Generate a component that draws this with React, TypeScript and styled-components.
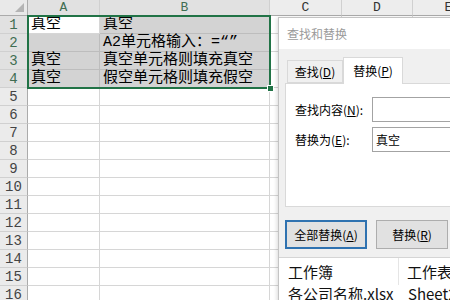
import React from 'react';
import styled, { createGlobalStyle } from 'styled-components';

const Global = createGlobalStyle`
  html, body { margin: 0; padding: 0; width: 450px; height: 300px; overflow: hidden; background: #fff; }
  #root { width: 450px; height: 300px; overflow: hidden; }
`;

const Stage = styled.div`
  position: relative;
  width: 450px;
  height: 300px;
  overflow: hidden;
  font-family: "Noto Sans CJK SC", sans-serif;
`;

const Sheet = styled.div`
  display: grid;
  grid-template-columns: 28px 72px 170px 72px 71px 72px;
  grid-template-rows: 16px repeat(16, 18px);
  font-family: "Liberation Mono", "Noto Sans CJK SC", monospace;
`;

const Corner = styled.div`
  grid-row: 1;
  grid-column: 1;
  box-sizing: border-box;
  background: #e9e9e9;
  border-right: 1px solid #ababab;
  border-bottom: 1px solid #ababab;
  display: flex;
  align-items: flex-end;
  justify-content: flex-end;
  padding: 0 3px 3px 0;
`;

const ColHead = styled.div<{ $sel?: boolean; $c: number }>`
  grid-row: 1;
  grid-column: ${p => p.$c};
  box-sizing: border-box;
  background: ${p => (p.$sel ? '#e1e1e1' : '#ededed')};
  border-right: 1px solid #d0d0d0;
  border-bottom: 1px solid ${p => (p.$sel ? '#7d9f8a' : '#ababab')};
  color: ${p => (p.$sel ? '#3f6d52' : '#333')};
  font-size: 13px;
  line-height: 15px;
  text-align: center;
`;

const RowHead = styled.div<{ $sel?: boolean; $r: number }>`
  grid-row: ${p => p.$r};
  grid-column: 1;
  box-sizing: border-box;
  background: ${p => (p.$sel ? '#e1e1e1' : '#ebebeb')};
  border-right: 1px solid ${p => (p.$sel ? '#7d9f8a' : '#ababab')};
  border-bottom: 1px solid #d0d0d0;
  color: ${p => (p.$sel ? '#3f6d52' : '#444')};
  font-size: 14px;
  line-height: 18px;
  text-align: center;
`;

const Cell = styled.div<{ $sel?: boolean; $active?: boolean; $r: number; $c: number }>`
  grid-row: ${p => p.$r};
  grid-column: ${p => p.$c};
  box-sizing: border-box;
  background: ${p => (p.$active ? '#fff' : p.$sel ? '#d3d3d3' : '#fff')};
  border-right: 1px solid ${p => (p.$sel && !p.$active ? '#bdbdbd' : '#d6d6d6')};
  border-bottom: 1px solid ${p => (p.$sel && !p.$active ? '#bdbdbd' : '#d6d6d6')};
  color: #000;
  font-size: 15px;
  line-height: 18px;
  padding-left: 3px;
  white-space: nowrap;
  overflow: visible;
  font-family: "Liberation Mono", "Noto Sans CJK SC", monospace;
`;

const SelectionFrame = styled.div`
  grid-column: 2 / 4;
  grid-row: 2 / 6;
  margin: -1px;
  border: 2px solid #217346;
  position: relative;
  pointer-events: none;
  z-index: 2;
`;

const FillHandle = styled.div`
  position: absolute;
  right: -5px;
  bottom: -5px;
  width: 5px;
  height: 5px;
  background: #217346;
  border: 1px solid #fff;
`;

const Dialog = styled.div`
  position: absolute;
  left: 278px;
  top: 17px;
  width: 190px;
  height: 300px;
  background: #f0f0f0;
  border: 1px solid #c4c4c4;
  box-shadow: -1px 1px 4px rgba(0, 0, 0, 0.15);
  display: flex;
  flex-direction: column;
  font-family: "Noto Sans CJK SC", sans-serif;
  z-index: 5;
`;

const TitleBar = styled.div`
  height: 31px;
  background: #fff;
  display: flex;
  align-items: center;
  padding-left: 8px;
  font-size: 12px;
  color: #9a9a9a;
`;

const TabStrip = styled.div`
  display: flex;
  align-items: flex-end;
  height: 26px;
  margin: 8px 0 0 8px;
  position: relative;
  z-index: 1;
`;

const Tab = styled.div<{ $active?: boolean }>`
  box-sizing: border-box;
  width: ${p => (p.$active ? '60px' : '56px')};
  height: ${p => (p.$active ? '27px' : '23px')};
  margin-bottom: ${p => (p.$active ? '-1px' : '0')};
  background: ${p => (p.$active ? '#fff' : '#f0f0f0')};
  border: 1px solid #d9d9d9;
  border-bottom: ${p => (p.$active ? 'none' : '1px solid #d9d9d9')};
  font-size: 12px;
  color: #000;
  display: flex;
  align-items: center;
  justify-content: center;
  padding-bottom: ${p => (p.$active ? '2px' : '0')};
  u { text-underline-offset: 1px; }
`;

const Panel = styled.div`
  box-sizing: border-box;
  height: 124px;
  margin-left: 6px;
  background: #fff;
  border: 1px solid #d9d9d9;
  padding: 13px 0 0 9px;
  display: grid;
  grid-template-columns: 77px 1fr;
  grid-auto-rows: 25px;
  row-gap: 5px;
  align-items: center;
  align-content: start;
`;

const Label = styled.div`
  font-size: 12px;
  color: #000;
  u { text-underline-offset: 1px; }
`;

const Field = styled.div`
  box-sizing: border-box;
  height: 25px;
  background: #fff;
  border: 1px solid #a3a3a3;
  border-right: none;
  font-size: 12px;
  line-height: 23px;
  padding-left: 3px;
  color: #000;
`;

const ButtonRow = styled.div`
  display: flex;
  gap: 9px;
  margin: 13px 0 0 6px;
`;

const Button = styled.div<{ $focus?: boolean; $w: number }>`
  box-sizing: border-box;
  width: ${p => p.$w}px;
  height: 29px;
  background: #e1e1e1;
  border: ${p => (p.$focus ? '2px solid #2f72b0' : '1px solid #adadad')};
  font-size: 12px;
  color: #000;
  display: flex;
  align-items: center;
  justify-content: center;
  u { text-underline-offset: 1px; }
`;

const ResultList = styled.div`
  margin-top: 8px;
  background: #fff;
  border-top: 1px solid #d5d5d5;
  flex: 1;
  display: grid;
  grid-template-columns: 120px 1fr;
  grid-template-rows: 27px 18px;
  align-content: start;
  font-size: 15px;
  line-height: 18px;
  color: #111;
`;

const ListHead = styled.div<{ $last?: boolean }>`
  box-sizing: border-box;
  display: flex;
  align-items: center;
  padding-left: ${p => (p.$last ? '8px' : '9px')};
  border-right: ${p => (p.$last ? 'none' : '1px solid #e5e5e5')};
  white-space: nowrap;
`;

const ListCell = styled.div`
  display: flex;
  align-items: center;
  padding-left: 9px;
  white-space: nowrap;
  font-family: "Noto Sans CJK SC", sans-serif;
`;

const cols = ['A', 'B', 'C', 'D', 'E'];

const data: Record<number, [string, string]> = {
  1: ['真空', '真空'],
  2: ['', 'A2单元格输入：=“”'],
  3: ['真空', '真空单元格则填充真空'],
  4: ['真空', '假空单元格则填充假空'],
};

export default function App() {
  const rows = Array.from({ length: 16 }, (_, i) => i + 1);
  return (
    <Stage>
      <Global />
      <Sheet>
        <Corner>
          <svg width="9" height="9" viewBox="0 0 9 9">
            <polygon points="9,0 9,9 0,9" fill="#b4b4b4" />
          </svg>
        </Corner>
        {cols.map((c, i) => (
          <ColHead key={c} $c={i + 2} $sel={c === 'A' || c === 'B'}>{c}</ColHead>
        ))}
        {rows.map(r => {
          const sel = r <= 4;
          const d = data[r];
          const gr = r + 1;
          return (
            <React.Fragment key={r}>
              <RowHead $r={gr} $sel={sel}>{r}</RowHead>
              <Cell $r={gr} $c={2} $sel={sel} $active={r === 1}>{d ? d[0] : ''}</Cell>
              <Cell $r={gr} $c={3} $sel={sel}>{d ? d[1] : ''}</Cell>
              <Cell $r={gr} $c={4} />
              <Cell $r={gr} $c={5} />
              <Cell $r={gr} $c={6} />
            </React.Fragment>
          );
        })}
        <SelectionFrame>
          <FillHandle />
        </SelectionFrame>
      </Sheet>

      <Dialog>
        <TitleBar>查找和替换</TitleBar>
        <TabStrip>
          <Tab>查找(<u>D</u>)</Tab>
          <Tab $active>替换(<u>P</u>)</Tab>
        </TabStrip>
        <Panel>
          <Label>查找内容(<u>N</u>):</Label>
          <Field />
          <Label>替换为(<u>E</u>):</Label>
          <Field>真空</Field>
        </Panel>
        <ButtonRow>
          <Button $focus $w={82}>全部替换(<u>A</u>)</Button>
          <Button $w={72}>替换(<u>R</u>)</Button>
        </ButtonRow>
        <ResultList>
          <ListHead>工作簿</ListHead>
          <ListHead $last>工作表</ListHead>
          <ListCell>各公司名称.xlsx</ListCell>
          <ListCell>Sheet2</ListCell>
        </ResultList>
      </Dialog>
    </Stage>
  );
}
